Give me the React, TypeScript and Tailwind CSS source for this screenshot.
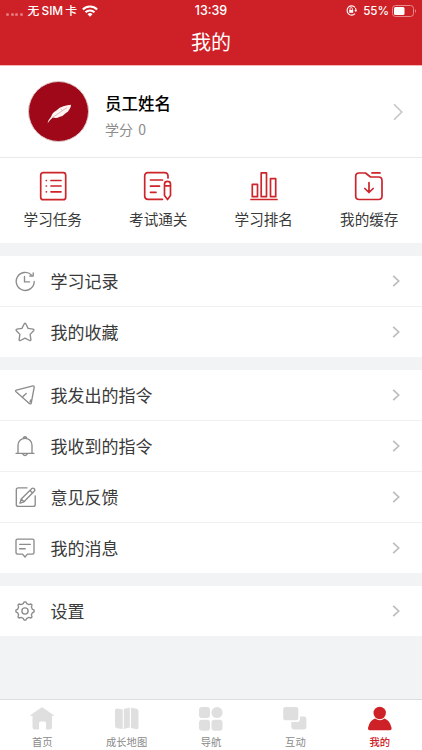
import type { ReactNode } from 'react';

function MenuIcon({ children }: { children: ReactNode }) {
  return (
    <svg className="h-[22px] w-[22px] shrink-0 text-[#8c8c8c]" viewBox="0 0 22 22" fill="none" stroke="currentColor" strokeWidth="1.35" strokeLinecap="round" strokeLinejoin="round">
      {children}
    </svg>
  );
}

const icons = {
  clock: (
    <MenuIcon>
      <path d="M17.6 5.1A9 9 0 1 0 20.2 11.5" />
      <path d="M19.2 2.8V6h-3.4" />
      <path d="M10.5 6.5v5.4h5" />
    </MenuIcon>
  ),
  star: (
    <MenuIcon>
      <path d="M10.3 2.8q.8-1.2 1.5 0l2.3 4.6 5 .8q1.4.4.5 1.5l-3.5 3.7.8 5.2q0 1.4-1.3.9L11 17.2l-4.6 2.3q-1.3.5-1.3-.9l.8-5.2-3.500-3.700q-.9-1.100.5-1.500l5-.8z" />
    </MenuIcon>
  ),
  send: (
    <MenuIcon>
      <path d="M2.3 6.1 19 1.900q1.300-.1 1.200 1.200l-2.900 15.800q-.6 1.600-2 .6L1.800 7.400q-.7-.9.5-1.300zM12.200 9.500 9 12.600M8.500 13.200l.6 1.100M16.800 16l-.8 2" />
    </MenuIcon>
  ),
  bell: (
    <MenuIcon>
      <path d="M2 18.300h18M4 18.300V10.300a7 7 0 0 1 14 0v8M9.400 2.700q1.600-2 3.200 0M8.600 18.800q2.400 3.400 4.800 0" />
    </MenuIcon>
  ),
  edit: (
    <MenuIcon>
      <path d="M13 1.800H4.300Q2.300 1.800 2.300 3.800v14.600q0 2 2 2h14.900q2 0 2-2V10" />
      <path d="m6 17.200 1.200-4.300L17.900 2.500q1.200-.8 2.300.2 1.100 1.100.2 2.300L10 15.800zM7.200 12.900l2.800 2.900M16 4.500l2.600 2.500" />
    </MenuIcon>
  ),
  message: (
    <MenuIcon>
      <path d="M3.500 2.100h15q1.500 0 1.500 1.500v12q0 1.500-1.500 1.500h-5L11 20l-2.500-2.900h-5Q2 17.100 2 15.600v-12q0-1.500 1.500-1.500zM5.600 7.300h10.800M5.600 11.700h5.600" />
    </MenuIcon>
  ),
  gear: (
    <MenuIcon>
      <path d="m9.200 3.700 1-1.800h1.600l1 1.800 2.100.9 2-.6 1.100 1.100-.6 2 .9 2.100 1.800 1v1.600l-1.800 1-.9 2.100.6 2-1.100 1.100-2-.6-2.100.9-1 1.800h-1.600l-1-1.800-2.100-.9-2 .6L4 16.900l.6-2-.9-2.100-1.800-1v-1.600l1.800-1 .9-2.100-.6-2L5.100 4l2 .6z" />
      <circle cx="11" cy="11" r="3.100" />
    </MenuIcon>
  ),
};

function Chevron({ large = false }: { large?: boolean }) {
  return large ? (
    <svg className="mr-[19px] h-[18px] w-[10px]" viewBox="0 0 10 18" fill="none" stroke="#c4c4c4" strokeWidth="1.5">
      <path d="m1 1.300 7.800 7.700L1 16.700" />
    </svg>
  ) : (
    <svg className="mr-[22px] h-3 w-2" viewBox="0 0 8 12" fill="none" stroke="#bdbdbd" strokeWidth="1.700">
      <path d="M1.200.8 6.700 6 1.200 11.200" />
    </svg>
  );
}

function Row({ icon, label, last = false }: { icon: ReactNode; label: string; last?: boolean }) {
  return (
    <div className={`flex items-center pl-[14px] ${last ? 'h-[50px]' : 'h-[51px] border-b border-[#f0f0f0]'}`}>
      {icon}
      <span className="mb-px ml-[14.5px] flex-1 text-[17px] leading-6 text-[#3a3a3a]">{label}</span>
      <Chevron />
    </div>
  );
}

function Shortcut({ label, children }: { label: string; children: ReactNode }) {
  return (
    <div className="flex flex-col items-center pt-3">
      <svg className="h-8 w-8" viewBox="0 0 32 32" fill="none" stroke="#cc252b" strokeWidth="1.700" strokeLinecap="round" strokeLinejoin="round">
        {children}
      </svg>
      <span className="mt-[6px] text-[14.6px] leading-[22px] text-[#3a3a3a]">{label}</span>
    </div>
  );
}

function Tab({ label, active = false, children }: { label: string; active?: boolean; children: ReactNode }) {
  return (
    <div className={`flex flex-col items-center pt-[6px] ${active ? 'font-medium text-[#ce2127]' : 'text-[#8a8a8a]'}`}>
      <svg className={`h-[26px] w-[26px] ${active ? 'text-[#ce2127]' : 'text-[#dfdfdf]'}`} viewBox="0 0 26 26" fill="currentColor">
        {children}
      </svg>
      <span className="mt-[2px] text-[10.300px] leading-4">{label}</span>
    </div>
  );
}

export default function App() {
  return (
    <div className="flex h-[750px] w-[422px] flex-col overflow-hidden bg-[#f2f3f5] font-['Noto_Sans_CJK_SC',sans-serif]">
      <header className="h-[66px] shrink-0 border-b border-[#f3b5b6] bg-[#ce2127] text-white">
        <div className="grid h-[21px] grid-cols-3 items-center font-['Inter','Noto_Sans_CJK_SC',sans-serif] text-[12px] font-medium leading-5">
          <div className="flex items-center pl-[6px]">
            <span className="mt-[7px] flex gap-[1.7px]">
              {[0, 1, 2, 3].map((n) => (
                <i key={n} className="h-[3px] w-[3px] rounded-full bg-[#e57b7f]" />
              ))}
            </span>
            <span className="ml-[4.5px] whitespace-nowrap text-[11.8px] [word-spacing:-1px]">无 SIM 卡</span>
            <svg className="ml-[5px] h-3 w-4" viewBox="0 0 16 12" fill="none" stroke="currentColor" strokeWidth="2.1">
              <path d="M.9 4.5a10 10 0 0 1 14.2 0M3.5 7.3a6.4 6.4 0 0 1 9 0" />
              <path d="M5.5 9.2a3.5 3.5 0 0 1 5 0L8 11.8z" fill="currentColor" stroke="none" />
            </svg>
          </div>
          <div className="text-center text-[12.5px]">13:39</div>
          <div className="flex items-center justify-end pr-[5px]">
            <svg className="mr-[6px] h-[11px] w-[11px]" viewBox="0 0 11 11" fill="none" stroke="currentColor">
              <path d="M9 2.300A4.600 4.600 0 1 0 9 8.700M9.400 2.900a4.600 4.600 0 0 1 .5 2.500" strokeWidth="1.1" />
              <path d="m8.400 5 1.500 2.200L11 5z" fill="currentColor" stroke="none" />
              <path d="M3.200 5h4v2.800h-4z" fill="currentColor" stroke="none" />
              <path d="M4 5V3.800a1.200 1.200 0 0 1 2.400 0V5" strokeWidth=".8" />
            </svg>
            <span className="text-[11.6px]">55%</span>
            <svg className="ml-[3px] h-[12px] w-[25px]" viewBox="0 0 25 12" fill="none">
              <rect x=".5" y=".5" width="21" height="11" rx="3" stroke="#e8898d" />
              <rect x="2" y="2" width="10.5" height="8" rx="1.5" fill="white" />
              <path d="M23 4q2 2 0 4z" fill="#e8898d" />
            </svg>
          </div>
        </div>
        <h1 className="mt-[6px] text-center text-[20px] font-normal leading-[30px]">我的</h1>
      </header>

      <section className="flex h-[92px] shrink-0 items-center border-b border-[#e9e9e9] bg-white pl-7">
        <div className="flex h-[61px] w-[61px] items-center justify-center rounded-full border border-[#ddc9ca] bg-[#9e0818]">
          <svg className="mt-1 h-6 w-7" viewBox="0 0 28 24" fill="none">
            <path d="M2.500 21.500q1-4.200 3.700-7 1-4 5.200-6 3-3.200 7-4.200 4-1.500 7.500-1.500.5 2-1.700 5-1 2-3.600 3.500-2.500 2.900-5.700 3.400-3.700 2.100-7 .8Q4.500 18 2.500 21.500" fill="#fff4f1" />
            <path d="M7.500 15.500 22 5.500M15.500 6.800l2 2" stroke="#cda29e" strokeWidth=".7" />
          </svg>
        </div>
        <div className="ml-4 flex-1 pt-[9px]">
          <div className="text-[16.5px] font-medium leading-6 text-black">员工姓名</div>
          <div className="mt-[2px] text-[14px] leading-6 text-[#8c8c8c] [word-spacing:2px]">学分 0</div>
        </div>
        <Chevron large />
      </section>

      <section className="grid h-[85px] shrink-0 grid-cols-4 bg-white">
        <Shortcut label="学习任务">
          <rect x="3.700" y="2.700" width="25" height="27" rx="2.500" />
          <path d="M14 10.500h10M14 16h10M14 21.800h10M9.300 10.500h.1M9.300 16h.1M9.300 21.800h.1" />
        </Shortcut>
        <Shortcut label="考试通关">
          <path d="M26 8V6q0-3.300-3.300-3.300H6Q2.700 2.700 2.700 6v20q0 3.300 3.300 3.300h14.500M8.500 10h12M8.500 16.200h9M8.500 22.300H14" />
          <path d="M22.500 14v11.500l3 4 3-4V14q0-2.600-3-2.600t-3 2.600zM22.500 15.800h6" />
        </Shortcut>
        <Shortcut label="学习排名">
          <path d="M3 29.500h26M4.300 14.300h5.200v12.400H4.300zM13.200 2.900h5.300v23.800h-5.300zM22.500 8.600h5.200v18.100h-5.200z" />
        </Shortcut>
        <Shortcut label="我的缓存">
          <path d="M12.500 3H6Q2.700 3 2.700 6.500V26q0 3.500 3.500 3.500h19.300q3.500 0 3.500-3.500V10.500Q29 7 25.500 7h-8zM19 2.900h8M16 12.500v10M11.800 18.500l4.200 4 4.200-4" />
        </Shortcut>
      </section>

      <section className="mt-[13px] shrink-0 bg-white">
        <Row icon={icons.clock} label="学习记录" />
        <Row icon={icons.star} label="我的收藏" last />
      </section>
      <section className="mt-[13px] shrink-0 bg-white">
        <Row icon={icons.send} label="我发出的指令" />
        <Row icon={icons.bell} label="我收到的指令" />
        <Row icon={icons.edit} label="意见反馈" />
        <Row icon={icons.message} label="我的消息" last />
      </section>
      <section className="mt-[13px] shrink-0 bg-white">
        <Row icon={icons.gear} label="设置" last />
      </section>

      <nav className="mt-auto grid h-[51px] shrink-0 grid-cols-5 border-t border-[#dcdde0] bg-white">
        <Tab label="首页">
          <path d="M12 1.700q1-.7 2 0L24.500 9q.8 1-.6 1H23v11q0 2.500-2.500 2.500H17V17q0-1.500-1.500-1.500h-4Q10 15.500 10 17v6.500H6Q3.500 23.500 3.500 21V10H2q-1.200 0-.4-1z" />
        </Tab>
        <Tab label="成长地图">
          <path d="m3 2.500 5 .7q.7.100.700.800v19l-5.700-.8Q1 22 1 20V4.200Q1 2.300 3 2.500zM9.800 3l6-1.500v20l-6 1.500zM17 1.500l5.500 1.200q2 .3 2 2.300v16.500q0 2-2 1.800L17 22z" />
        </Tab>
        <Tab label="导航">
          <rect x="1" y="1" width="11" height="11" rx="3" />
          <circle cx="19" cy="6.500" r="5.600" />
          <rect x="1" y="13.700" width="11" height="11" rx="3" />
          <rect x="13.500" y="13.700" width="11" height="11" rx="3" />
        </Tab>
        <Tab label="互动">
          <path d="M3.500 1H14q2.300 0 2.300 2.300V12q0 2.300-2.300 2.300H3.500Q1.200 14.300 1.200 12V3.300Q1.200 1 3.500 1z" />
          <path d="M18 10.500h4q2.400 0 2.400 2.400V21q0 2.400-2.400 2.400H11.700Q9.300 23.400 9.300 21v-5H15q3 0 3-3z" />
        </Tab>
        <Tab label="我的" active>
          <circle cx="12.700" cy="7" r="6.200" />
          <path d="M8 12.500q5 3.500 9.500 0 5 1.500 7 9 .5 2.700-1.700 2.700H2.800Q.6 24.200 1.100 21.500 3 14 8 12.500z" />
        </Tab>
      </nav>
    </div>
  );
}
